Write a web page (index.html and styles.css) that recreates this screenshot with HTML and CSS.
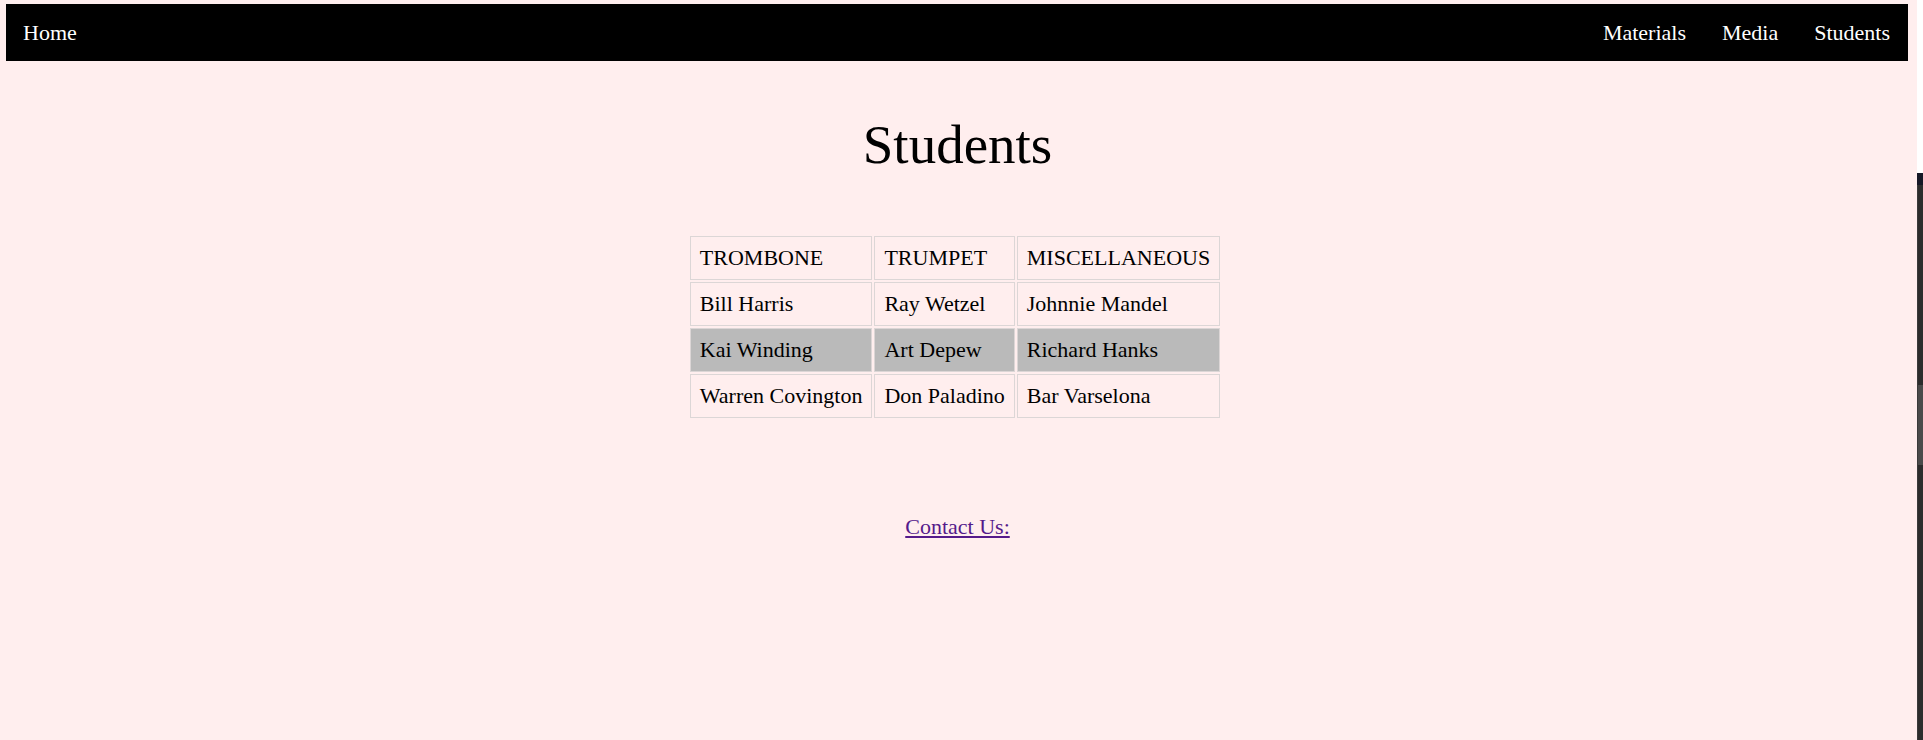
FILE: index.html
```html
<!DOCTYPE html>
<html lang="en">
<head>
<meta charset="utf-8">
<title>Students</title>
<link rel="stylesheet" href="styles.css">
</head>
<body>
<div class="frame">
  <div class="page">
    <nav class="navbar">
      <a class="nav-link" href="#">Home</a>
      <div class="nav-right">
        <a class="nav-link" href="#">Materials</a>
        <a class="nav-link" href="#">Media</a>
        <a class="nav-link" href="#">Students</a>
      </div>
    </nav>
    <h1 class="title">Students</h1>
    <div class="table-wrap">
      <table class="roster">
        <tr><td>TROMBONE</td><td>TRUMPET</td><td>MISCELLANEOUS</td></tr>
        <tr><td>Bill Harris</td><td>Ray Wetzel</td><td>Johnnie Mandel</td></tr>
        <tr class="shaded"><td>Kai Winding</td><td>Art Depew</td><td>Richard Hanks</td></tr>
        <tr><td>Warren Covington</td><td>Don Paladino</td><td>Bar Varselona</td></tr>
      </table>
    </div>
    <p class="contact"><a class="contact-link" href="#">Contact Us:</a></p>
  </div>
  <div class="side-strip">
    <div class="strip-top"></div>
    <div class="strip-head"></div>
    <div class="strip-track">
      <div class="strip-thumb"></div>
    </div>
  </div>
</div>
</body>
</html>
```

FILE: styles.css
```css
html, body {
  margin: 0;
  padding: 0;
  height: 100%;
}

body {
  font-family: "Liberation Serif", "Times New Roman", serif;
  background: #2a2a2a;
  overflow: hidden;
}

.frame {
  display: flex;
  height: 740px;
}

.page {
  flex: 1;
  background: #ffeeee;
  padding: 4px 9px 0 6px;
  box-sizing: border-box;
}

.navbar {
  display: flex;
  justify-content: space-between;
  background: #000;
  height: 57px;
}

.nav-right {
  display: flex;
}

.nav-link {
  color: #fff;
  text-decoration: none;
  font-size: 22px;
  line-height: 57px;
  padding: 0 18px 0 17px;
}

.nav-right .nav-link {
  padding: 0 18px;
}

.title {
  margin: 52px 0 0;
  text-align: center;
  font-weight: normal;
  font-size: 55px;
  line-height: 64px;
  padding-left: 1px;
}

.table-wrap {
  display: flex;
  justify-content: center;
  margin-top: 57px;
  padding-right: 4px;
}

.roster {
  border-collapse: separate;
  border-spacing: 2px;
  font-size: 22px;
  line-height: 26px;
}

.roster td {
  border: 1px solid #dcd6d6;
  padding: 8px 9px 8px 9px;
  white-space: nowrap;
}

.roster .shaded td {
  background: #bababa;
}

.contact {
  margin: 94px 0 0;
  text-align: center;
  font-size: 22px;
  line-height: 26px;
  padding-left: 1px;
}

.contact-link {
  color: #551a8b;
}

.side-strip {
  width: 6px;
  display: flex;
  flex-direction: column;
}

.strip-top {
  height: 173px;
  background: #ffffff;
}

.strip-head {
  height: 12px;
  background: #161826;
}

.strip-track {
  flex: 1;
  background: #2c2c2c;
  border-left: 1px solid #3a3a3a;
  padding-top: 200px;
}

.strip-thumb {
  height: 80px;
  background: #4a4a4a;
}
```
